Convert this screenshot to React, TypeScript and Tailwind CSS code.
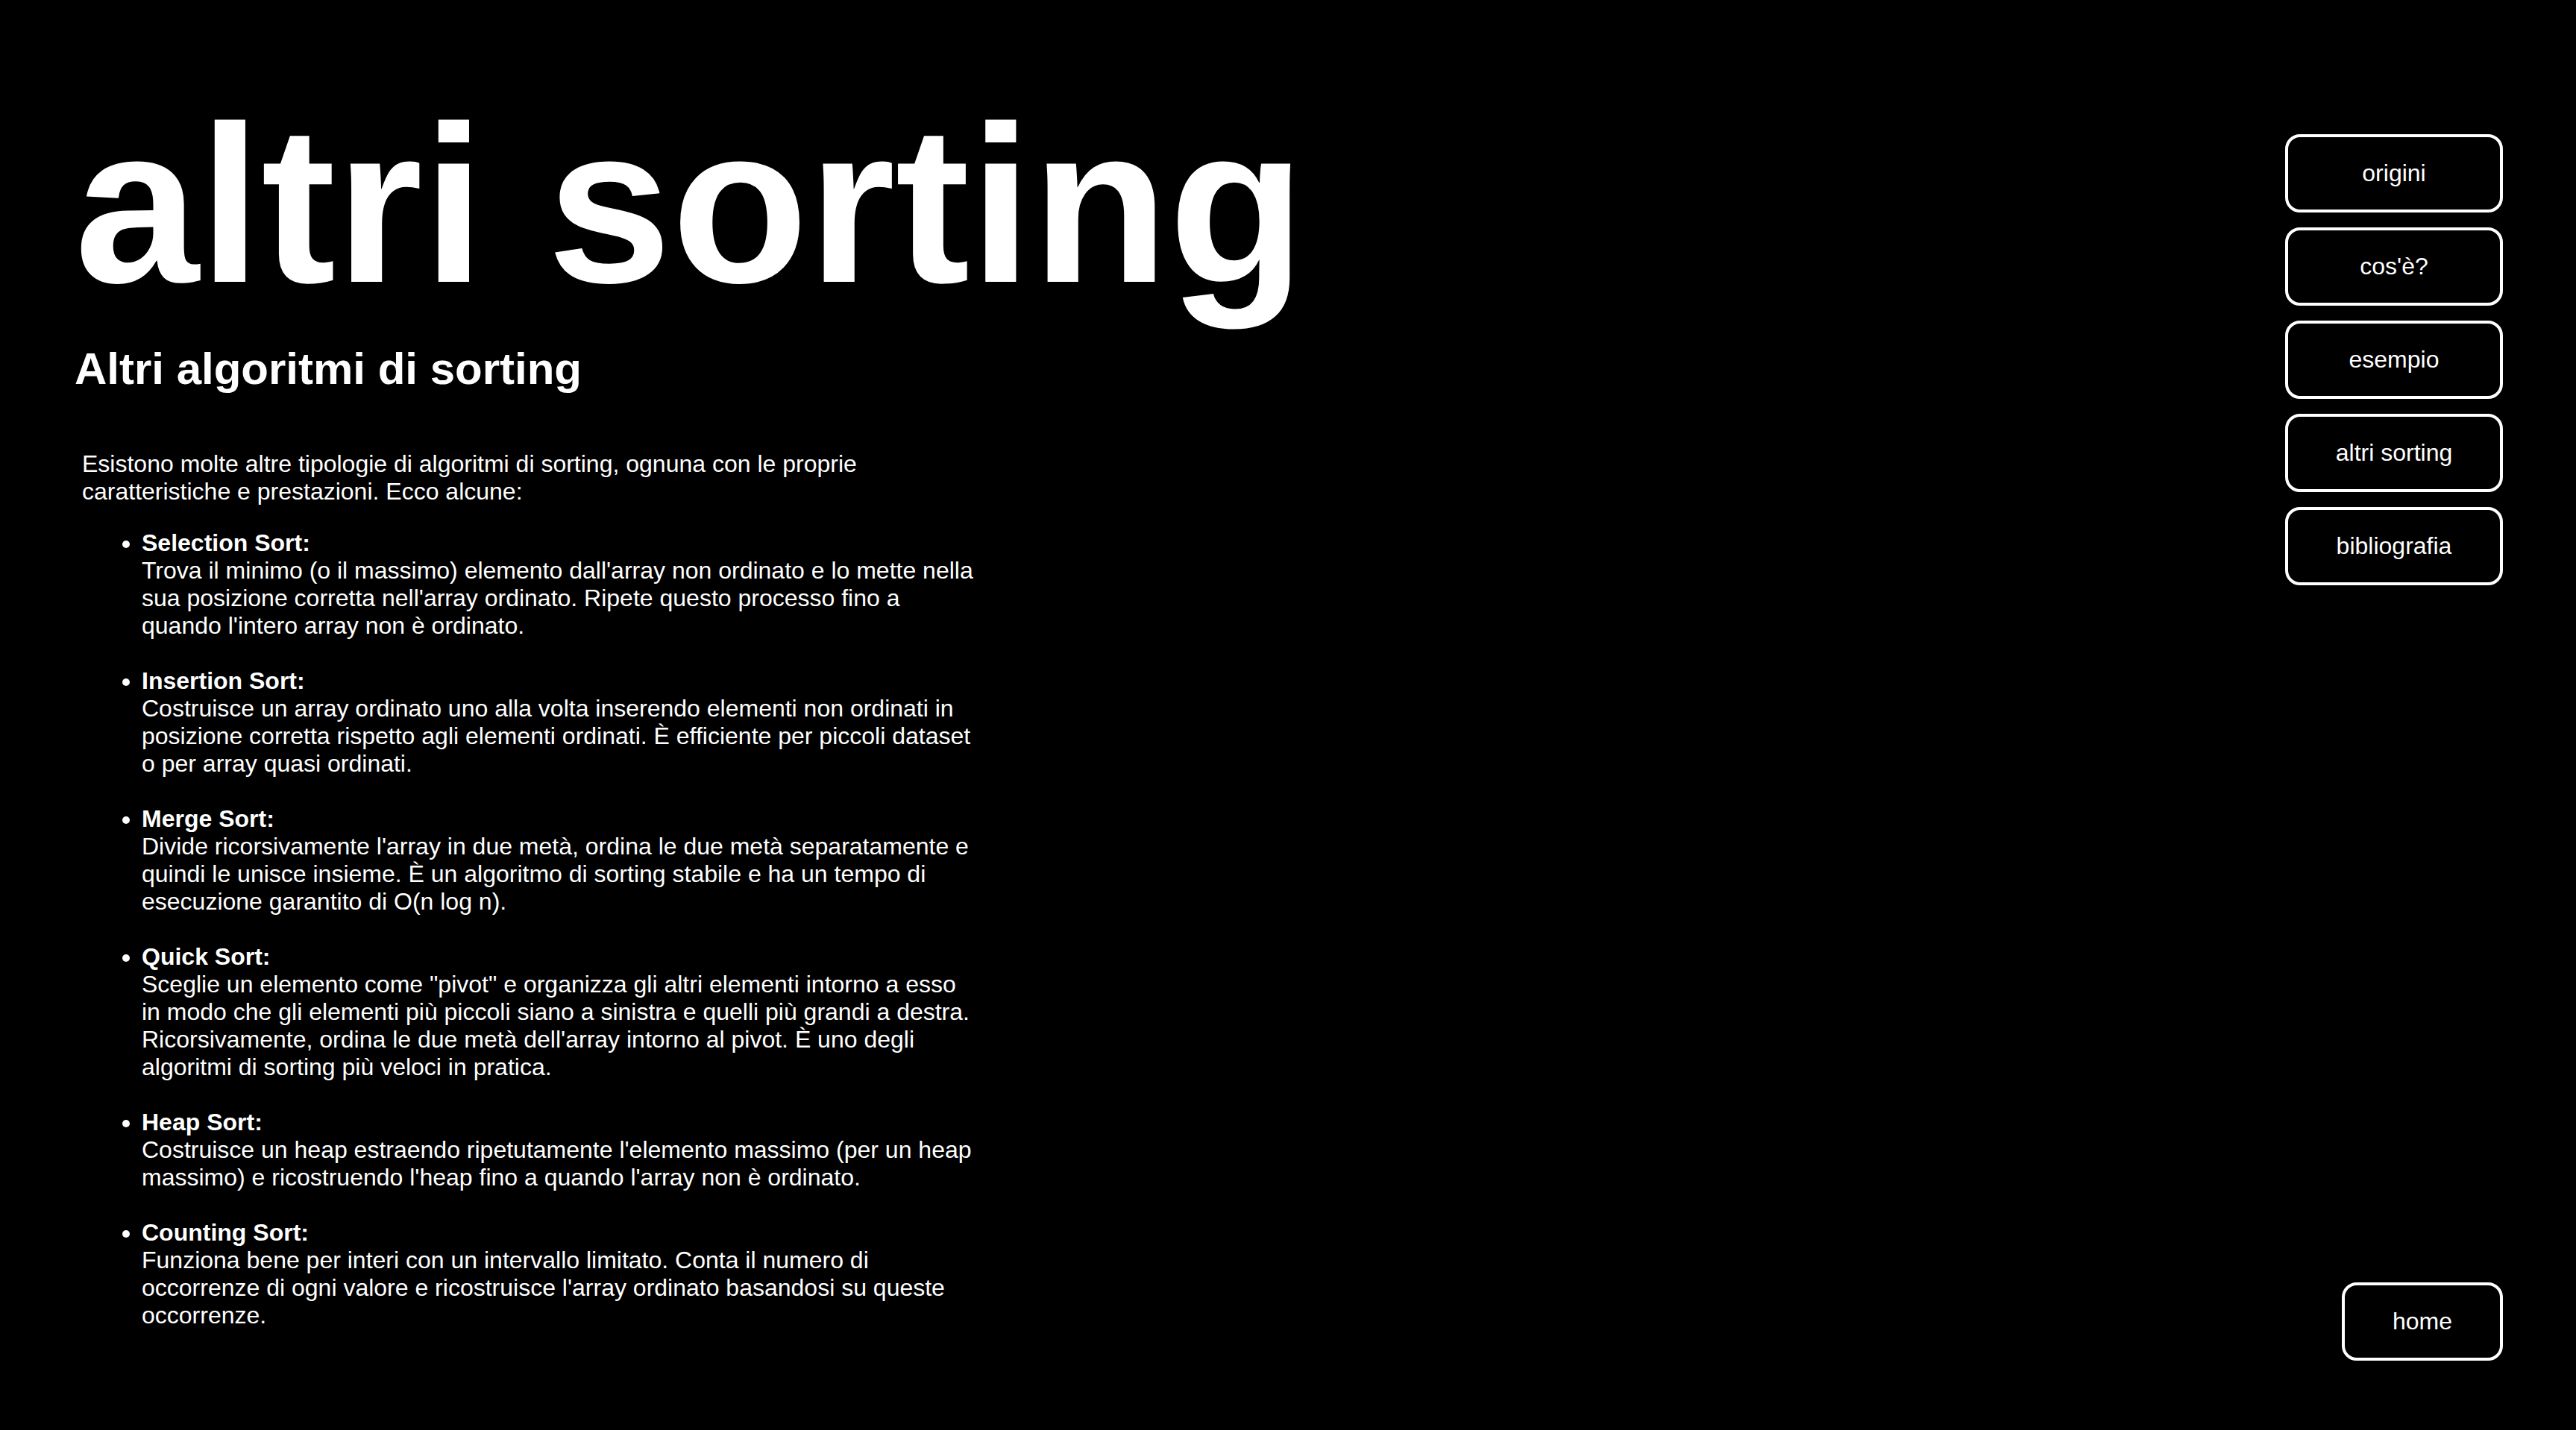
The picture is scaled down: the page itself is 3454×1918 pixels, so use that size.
const nav = ["origini", "cos'è?", "esempio", "altri sorting", "bibliografia"];

const sorts = [
  { name: "Selection Sort:", text: "Trova il minimo (o il massimo) elemento dall'array non ordinato e lo mette nella sua posizione corretta nell'array ordinato. Ripete questo processo fino a quando l'intero array non è ordinato." },
  { name: "Insertion Sort:", text: "Costruisce un array ordinato uno alla volta inserendo elementi non ordinati in posizione corretta rispetto agli elementi ordinati. È efficiente per piccoli dataset o per array quasi ordinati." },
  { name: "Merge Sort:", text: "Divide ricorsivamente l'array in due metà, ordina le due metà separatamente e quindi le unisce insieme. È un algoritmo di sorting stabile e ha un tempo di esecuzione garantito di O(n log n)." },
  { name: "Quick Sort:", text: "Sceglie un elemento come \"pivot\" e organizza gli altri elementi intorno a esso in modo che gli elementi più piccoli siano a sinistra e quelli più grandi a destra. Ricorsivamente, ordina le due metà dell'array intorno al pivot. È uno degli algoritmi di sorting più veloci in pratica." },
  { name: "Heap Sort:", text: "Costruisce un heap estraendo ripetutamente l'elemento massimo (per un heap massimo) e ricostruendo l'heap fino a quando l'array non è ordinato." },
  { name: "Counting Sort:", text: "Funziona bene per interi con un intervallo limitato. Conta il numero di occorrenze di ogni valore e ricostruisce l'array ordinato basandosi su queste occorrenze." },
];

const buttonStyle =
  "h-[105px] rounded-[20px] border-4 border-white bg-black text-center text-[32px] leading-[37px] text-white";

export default function App() {
  return (
    <div className="flex min-h-screen justify-between bg-black pr-[98px] pl-[100px] font-['Liberation_Sans',Arial,sans-serif] text-white">
      <main className="pt-[102px]">
        <h1 className="text-[300px] leading-[344px] font-bold">altri sorting</h1>
        <h2 className="mt-[14px] text-[60px] leading-[69px] font-bold">Altri algoritmi di sorting</h2>
        <div className="mt-[75px] w-[1210px] pl-[10px] text-[32px] leading-[37px]">
          <p>Esistono molte altre tipologie di algoritmi di sorting, ognuna con le proprie caratteristiche e prestazioni. Ecco alcune:</p>
          <ul className="mt-8 flex list-disc flex-col gap-[37px] pl-20">
            {sorts.map((s) => (
              <li key={s.name}>
                <strong>{s.name}</strong>
                <p>{s.text}</p>
              </li>
            ))}
          </ul>
        </div>
      </main>
      <nav className="flex flex-col items-end justify-between pt-[180px] pb-[93px]">
        <div className="flex flex-col gap-5">
          {nav.map((n) => (
            <button key={n} type="button" className={`${buttonStyle} w-[292px]`}>{n}</button>
          ))}
        </div>
        <button type="button" className={`${buttonStyle} w-[216px]`}>home</button>
      </nav>
    </div>
  );
}
